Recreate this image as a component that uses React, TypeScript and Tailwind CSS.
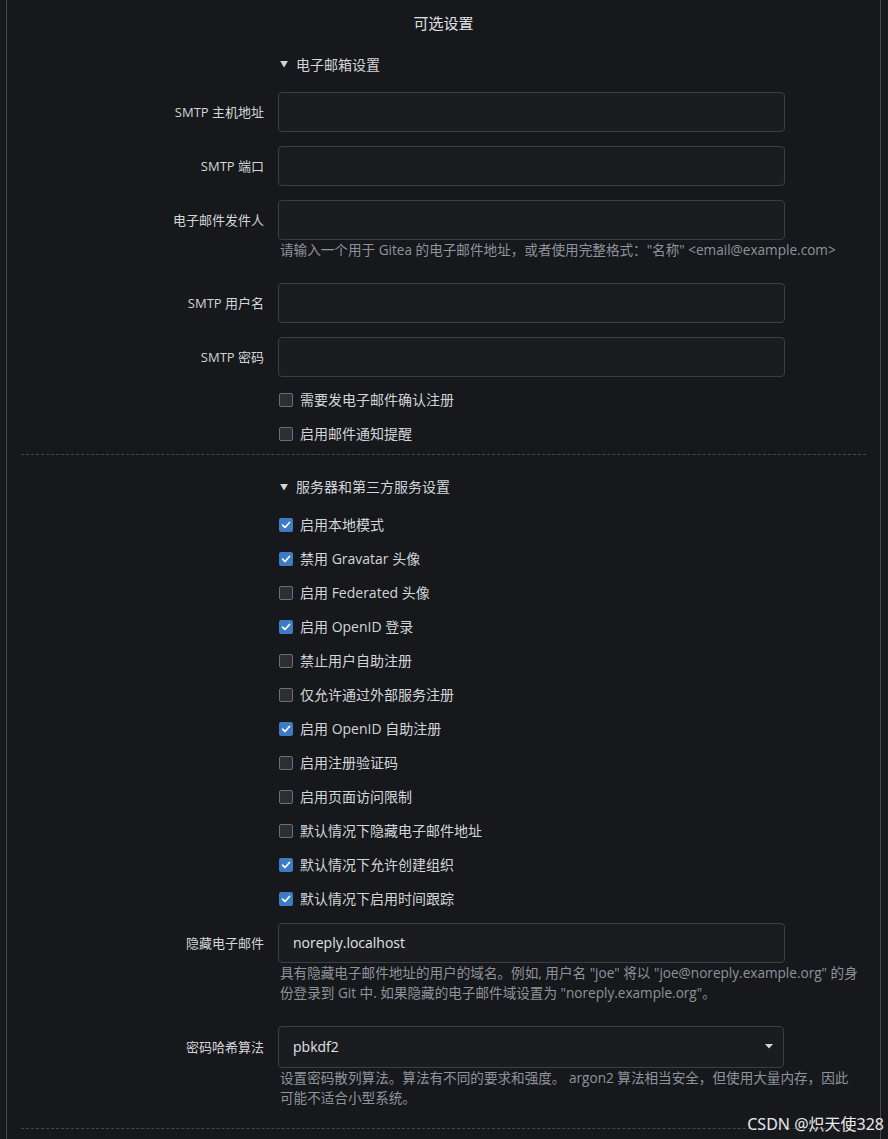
import React from "react";

const font = { fontFamily: '"Open Sans", "Noto Sans CJK SC", sans-serif' };

function Label({ children }: { children: React.ReactNode }) {
  return (
    <div className="w-[243px] shrink-0 pr-0 text-right text-[13px] leading-[20px] text-[#d3d6d9]">
      {children}
    </div>
  );
}

function Input({ value }: { value?: string }) {
  return (
    <div className="h-[40px] w-[507px] rounded-[4px] border border-[#3b3e44] bg-[#1a1c20] px-[14px] flex items-center text-[14px] text-[#e2e4e6]">
      {value}
    </div>
  );
}

function FieldRow({ label, value, mt }: { label: string; value?: string; mt: string }) {
  return (
    <div className={`flex items-center gap-[14px] ${mt}`}>
      <Label>{label}</Label>
      <Input value={value} />
    </div>
  );
}

function Help({ children, pr = "pr-[2px]" }: { children: React.ReactNode; pr?: string }) {
  return (
    <div className={`ml-[259px] ${pr} text-[13.6px] leading-[20.5px] text-[#8e949b]`}>
      {children}
    </div>
  );
}

function Checkbox({ label, checked }: { label: string; checked?: boolean }) {
  return (
    <div className="ml-[258px] flex h-[20px] items-center gap-[7px] text-[14px] text-[#d3d6d9]">
      {checked ? (
        <span className="flex h-[14px] w-[14px] items-center justify-center rounded-[2px] bg-[#3d7cc4]">
          <svg width="10" height="10" viewBox="0 0 10 10" fill="none">
            <path d="M1.6 5.2 L4 7.5 L8.5 2.5" stroke="#ffffff" strokeWidth="1.7" strokeLinecap="round" strokeLinejoin="round" />
          </svg>
        </span>
      ) : (
        <span className="h-[14px] w-[14px] rounded-[2px] border border-[#6b6e75] bg-[#2c2e34]" />
      )}
      <span>{label}</span>
    </div>
  );
}

function Heading({ children, mt }: { children: React.ReactNode; mt: string }) {
  return (
    <div className={`ml-[259px] flex h-[20px] items-center gap-[8px] text-[14px] text-[#d3d6d9] ${mt}`}>
      <span className="text-[8px] leading-none text-[#d3d6d9]">▼</span>
      <span>{children}</span>
    </div>
  );
}

export default function App() {
  const server: [string, boolean][] = [
    ["启用本地模式", true],
    ["禁用 Gravatar 头像", true],
    ["启用 Federated 头像", false],
    ["启用 OpenID 登录", true],
    ["禁止用户自助注册", false],
    ["仅允许通过外部服务注册", false],
    ["启用 OpenID 自助注册", true],
    ["启用注册验证码", false],
    ["启用页面访问限制", false],
    ["默认情况下隐藏电子邮件地址", false],
    ["默认情况下允许创建组织", true],
    ["默认情况下启用时间跟踪", true],
  ];
  return (
    <div className="relative min-h-[1139px] w-full overflow-hidden bg-[#16181c]" style={font}>
      <div className="ml-[6px] w-[875px] min-h-[1139px] border-x border-[#44474d] px-[14px]">
        <div className="pt-[13px] text-center text-[15px] leading-[20px] text-[#e0e2e4]">可选设置</div>

        <Heading mt="mt-[21px]">电子邮箱设置</Heading>

        <FieldRow label="SMTP 主机地址" mt="mt-[18px]" />
        <FieldRow label="SMTP 端口" mt="mt-[14px]" />
        <FieldRow label="电子邮件发件人" mt="mt-[14px]" />
        <Help>请输入一个用于 Gitea 的电子邮件地址，或者使用完整格式："名称" &lt;email@example.com&gt;</Help>
        <FieldRow label="SMTP 用户名" mt="mt-[22px]" />
        <FieldRow label="SMTP 密码" mt="mt-[14px]" />

        <div className="mt-[13px] flex flex-col gap-[14px]">
          <Checkbox label="需要发电子邮件确认注册" />
          <Checkbox label="启用邮件通知提醒" />
        </div>

        <div className="mt-[10px] border-t border-dashed border-[#44474d]" />

        <Heading mt="mt-[22px]">服务器和第三方服务设置</Heading>

        <div className="mt-[18px] flex flex-col gap-[14px]">
          {server.map(([l, c]) => (
            <Checkbox key={l} label={l} checked={c} />
          ))}
        </div>

        <FieldRow label="隐藏电子邮件" value="noreply.localhost" mt="mt-[14px]" />
        <Help>
          具有隐藏电子邮件地址的用户的域名。例如, 用户名 "joe" 将以 "joe@noreply.example.org" 的身份登录到 Git 中. 如果隐藏的电子邮件域设置为 "noreply.example.org"。
        </Help>

        <div className="mt-[22px] flex items-center gap-[14px]">
          <Label>密码哈希算法</Label>
          <div className="flex h-[42px] w-[506px] items-center justify-between rounded-[4px] border border-[#3b3e44] bg-[#1a1c20] pl-[14px] pr-[10px] text-[14px] text-[#e2e4e6]">
            <span>pbkdf2</span>
            <svg width="8" height="5" viewBox="0 0 8 5"><path d="M0 0 H8 L4 4.5 Z" fill="#d3d6d9" /></svg>
          </div>
        </div>
        <Help pr="pr-[10px]">
          设置密码散列算法。算法有不同的要求和强度。 argon2 算法相当安全，但使用大量内存，因此可能不适合小型系统。
        </Help>

        <div className="mt-[19px] border-t border-dashed border-[#44474d]" />
      </div>
      <div className="absolute bottom-[5px] right-[4px] text-[16px] leading-[20px] text-[#e8e8e8]" style={{ fontFamily: '"Noto Sans", "Noto Sans CJK SC", sans-serif' }}>
        CSDN @炽天使328
      </div>
    </div>
  );
}
